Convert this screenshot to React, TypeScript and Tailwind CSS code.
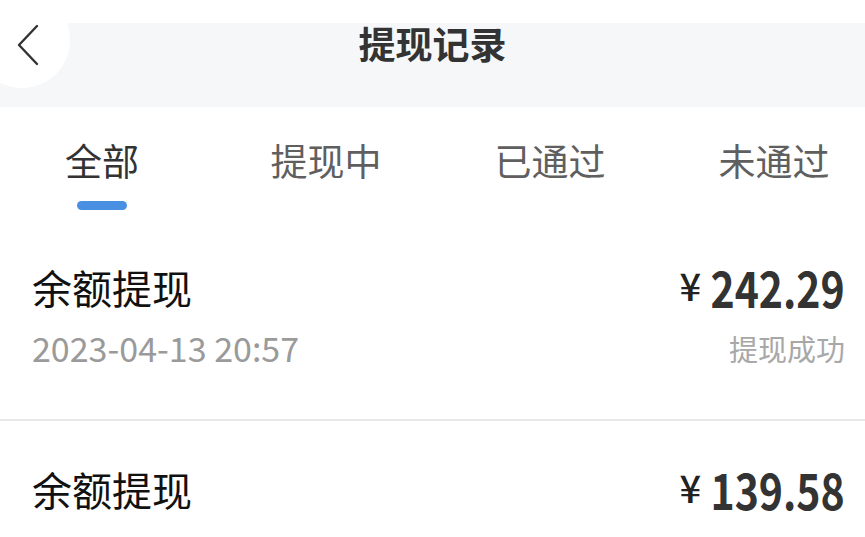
const TABS = ['全部', '提现中', '已通过', '未通过'];

const RECORDS = [
  { title: '余额提现', time: '2023-04-13 20:57', amount: '242.29', status: '提现成功' },
  { title: '余额提现', time: '2023-04-12 18:31', amount: '139.58', status: '提现成功' },
];

function BackButton() {
  return (
    <div className="absolute left-[-26px] top-[-8px] w-[96px] h-[96px] rounded-full bg-white flex items-center justify-center">
      <svg width="24" height="42" viewBox="0 0 24 42" fill="none" className="ml-[12px] mt-[10px]">
        <path d="M21 2 L3 21 L21 40" stroke="#333" strokeWidth="2.4" strokeLinecap="round" strokeLinejoin="round" />
      </svg>
    </div>
  );
}

export default function App() {
  const active = 0;
  return (
    <div className="relative w-[865px] h-[537px] overflow-hidden bg-white font-['Noto_Sans_CJK_SC','Noto_Sans',sans-serif]">
      <div className="h-[23px]" />
      <header className="h-[84px] bg-[#f6f7f9] flex justify-center">
        <h1 className="mt-[2px] text-[37px] leading-none font-bold text-[#333]">提现记录</h1>
      </header>
      <BackButton />

      <nav className="flex ml-[-10px] pt-[35px] pb-[9px]">
        {TABS.map((t, i) => (
          <div key={t} className="w-[224px] shrink-0 flex flex-col items-center">
            <span className={`text-[37px] leading-none ${i === active ? 'text-[#333]' : 'text-[#5f5f5f]'}`}>{t}</span>
            <span className={`mt-[22px] h-[9px] w-[50px] rounded-full ${i === active ? 'bg-[#4a90e2]' : 'bg-transparent'}`} />
          </div>
        ))}
      </nav>

      <div>
        {RECORDS.map((r, i) => (
          <div key={i} className="flex justify-between pl-[32px] pr-[20px] pt-[48px] pb-[54px] border-b-[2px] border-[#e8e8e8]">
            <div className="flex flex-col">
              <span className="text-[40px] leading-none text-[#111]">{r.title}</span>
              <span className="mt-[24px] text-[34px] leading-none text-[#9a9a9a]">{r.time}</span>
            </div>
            <div className="flex flex-col items-end">
              <div className="flex items-start mt-[-6px]">
                <span className="mt-[5px] mr-[-20px] text-[38px] leading-none font-medium text-[#222]">¥</span>
                <span className="text-[50px] leading-none font-bold text-[#333] scale-x-[0.82] origin-right">{r.amount}</span>
              </div>
              <span className="mt-[23px] text-[29px] leading-none text-[#a8a8a8]">{r.status}</span>
            </div>
          </div>
        ))}
      </div>
    </div>
  );
}
